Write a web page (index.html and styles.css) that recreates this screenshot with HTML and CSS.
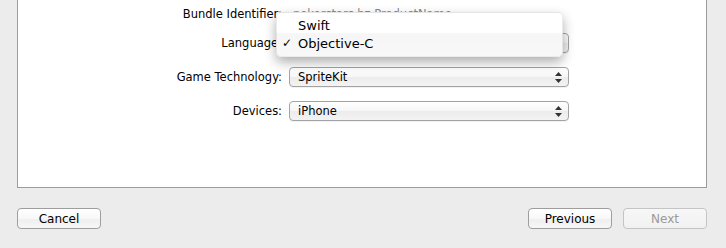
FILE: index.html
```html
<!DOCTYPE html>
<html lang="en">
<head>
    <meta charset="UTF-8">
    <title>Choose options for your new project</title>
    <link rel="stylesheet" href="styles.css">
</head>
<body>

    <!-- 設定パネル -->
    <div class="panel">
        <div class="form">
            <div class="label first">Bundle Identifier:</div>
            <div class="value first">pokerstars.hz.ProductName</div>

            <div class="label">Language:</div>
            <div class="popup">
                <span>Objective-C</span>
                <svg class="arrows" width="7" height="11" viewBox="0 0 7 11"><path d="M3.5 0 L7 4 L0 4 Z M0 7 L7 7 L3.5 11 Z" fill="#333"/></svg>
            </div>

            <div class="label">Game Technology:</div>
            <div class="popup">
                <span>SpriteKit</span>
                <svg class="arrows" width="7" height="11" viewBox="0 0 7 11"><path d="M3.5 0 L7 4 L0 4 Z M0 7 L7 7 L3.5 11 Z" fill="#333"/></svg>
            </div>

            <div class="label">Devices:</div>
            <div class="popup">
                <span>iPhone</span>
                <svg class="arrows" width="7" height="11" viewBox="0 0 7 11"><path d="M3.5 0 L7 4 L0 4 Z M0 7 L7 7 L3.5 11 Z" fill="#333"/></svg>
            </div>
        </div>

        <!-- 開いているメニュー -->
        <div class="menu">
            <div class="menu-item"><span class="check"></span>Swift</div>
            <div class="menu-item current"><span class="check">✓</span>Objective-C</div>
        </div>
    </div>

    <!-- 下のボタン -->
    <div class="footer">
        <button class="btn">Cancel</button>
        <div class="footer-right">
            <button class="btn">Previous</button>
            <button class="btn disabled">Next</button>
        </div>
    </div>

</body>
</html>
```

FILE: styles.css
```css
body {
    margin: 0;
    background-color: #ececec;
    font-family: "DejaVu Sans", sans-serif;
    font-size: 11.5px;
    color: #000;
}
/* 白いパネル */
.panel {
    position: relative;
    margin: 0 19px 0 17px;
    height: 187px;
    background-color: #fff;
    border: 1px solid #9c9c9c;
    border-top: none;
}
.form {
    display: grid;
    grid-template-columns: 264px 280px;
    grid-template-rows: 15px 20px 20px 20px;
    column-gap: 7px;
    row-gap: 14px;
    padding-top: 4px;
}
.label {
    text-align: right;
    line-height: 20px;
    white-space: nowrap;
}
.value {
    color: #8a8a8a;
    line-height: 20px;
    padding-left: 4px;
}
/* ポップアップボタン */
.popup {
    display: flex;
    align-items: center;
    justify-content: space-between;
    height: 18px;
    border: 1px solid #a3a3a3;
    border-radius: 4px;
    background: linear-gradient(#ffffff, #f6f6f6 50%, #ececec 52%, #f3f3f3);
    padding: 0 6px 0 8px;
    box-shadow: 0 1px 0 rgba(0, 0, 0, 0.05);
}
.arrows {
    display: block;
}
/* メニュー */
.menu {
    position: absolute;
    left: 258px;
    top: 12px;
    width: 287px;
    height: 45px;
    padding-top: 3px;
    box-sizing: border-box;
    background: linear-gradient(#ffffff, #ffffff 45%, #f6f6f6 48%, #f8f8f8);
    border-radius: 5px;
    border: 1px solid rgba(0, 0, 0, 0.08);
    box-shadow: 0 5px 12px rgba(0, 0, 0, 0.32);
}
.menu-item {
    display: flex;
    align-items: center;
    height: 18px;
    font-size: 13px;
}
.check {
    width: 21px;
    padding-left: 5px;
    box-sizing: border-box;
    font-size: 12px;
    font-weight: bold;
}
/* フッター */
.footer {
    display: flex;
    justify-content: space-between;
    margin: 20px 19px 0 17px;
}
.footer-right {
    display: flex;
    gap: 11px;
}
.btn {
    width: 84px;
    height: 21px;
    font-family: "DejaVu Sans", sans-serif;
    font-size: 12px;
    color: #000;
    border: 1px solid #9e9e9e;
    border-radius: 4px;
    background: linear-gradient(#ffffff, #f8f8f8 50%, #efefef 52%, #f6f6f6);
    padding: 0;
}
.btn.disabled {
    color: #9a9a9a;
    border-color: #c4c4c4;
    background: linear-gradient(#f7f7f7, #f1f1f1);
}
```
